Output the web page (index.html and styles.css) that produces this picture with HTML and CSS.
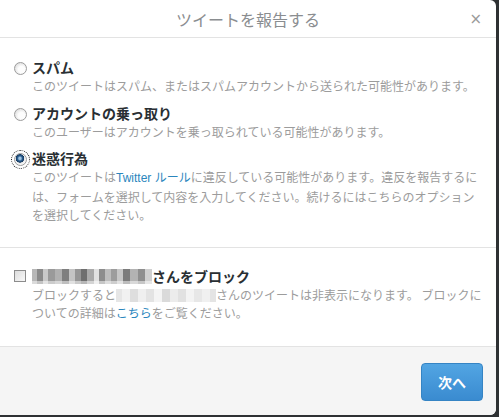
FILE: index.html
```html
<!DOCTYPE html>
<html lang="ja">
<head>
<meta charset="utf-8">
<title>ツイートを報告する</title>
<link rel="stylesheet" href="styles.css">
</head>
<body>
<div class="modal">
  <header class="modal-header">
    <span></span>
    <h1 class="title">ツイートを報告する</h1>
    <span class="close">×</span>
  </header>

  <section class="options">
    <div class="option">
      <span class="radio"></span>
      <div class="option-body">
        <div class="label">スパム</div>
        <div class="desc">このツイートはスパム、またはスパムアカウントから送られた可能性があります。</div>
      </div>
    </div>
    <div class="option">
      <span class="radio"></span>
      <div class="option-body">
        <div class="label">アカウントの乗っ取り</div>
        <div class="desc">このユーザーはアカウントを乗っ取られている可能性があります。</div>
      </div>
    </div>
    <div class="option">
      <span class="radio checked"></span>
      <div class="option-body">
        <div class="label">迷惑行為</div>
        <div class="desc">このツイートは<a class="link latin">Twitter ルール</a>に違反している可能性があります。違反を報告するに<br>は、フォームを選択して内容を入力してください。続けるにはこちらのオプション<br>を選択してください。</div>
      </div>
    </div>
  </section>

  <section class="block">
    <div class="option">
      <span class="checkbox"></span>
      <div class="option-body">
        <div class="label"><span class="mosaic-dark"></span>さんをブロック</div>
        <div class="desc">ブロックすると<span class="mosaic-light"></span>さんのツイートは非表示になります。 ブロックに<br>ついての詳細は<a class="link">こちら</a>をご覧ください。</div>
      </div>
    </div>
  </section>

  <footer class="modal-footer">
    <button class="btn-next">次へ</button>
  </footer>
</div>
</body>
</html>
```

FILE: styles.css
```css
html, body {
  margin: 0;
  padding: 0;
}
body {
  background: #2e3133;
  width: 499px;
  height: 417px;
  overflow: hidden;
  font-family: "Noto Sans CJK JP", "Liberation Sans", sans-serif;
}
.modal {
  width: 496px;
  height: 415px;
  background: #fff;
  border-radius: 0 6px 6px 0;
  overflow: hidden;
  display: flex;
  flex-direction: column;
}
.modal-header {
  height: 37px;
  border-bottom: 1px solid #e3e3e3;
  display: grid;
  grid-template-columns: 1fr auto 1fr;
  align-items: center;
  padding: 0 14px 0 14px;
}
.title {
  margin: 0;
  font-size: 16px;
  font-weight: normal;
  color: #8a8d90;
  line-height: 36px;
}
.close {
  justify-self: end;
  font-family: "DejaVu Sans", sans-serif;
  font-size: 15px;
  color: #9a9a9a;
  line-height: 36px;
}
.options {
  padding: 20px 0 22px 14px;
  border-bottom: 1px solid #e3e3e3;
  display: flex;
  flex-direction: column;
  gap: 8px;
}
.block {
  padding: 19px 0 23px 14px;
  border-bottom: 1px solid #e3e3e3;
}
.option {
  display: grid;
  grid-template-columns: 18px 1fr;
  align-items: start;
}
.label {
  font-size: 14px;
  font-weight: bold;
  color: #292f33;
  line-height: 19px;
  white-space: nowrap;
  display: flex;
  align-items: center;
}
.desc {
  font-size: 12px;
  color: #9c9c9c;
  line-height: 18.5px;
  white-space: nowrap;
}
.latin {
  font-family: "Liberation Sans", "Noto Sans CJK JP", sans-serif;
}
.link {
  color: #2b86bd;
  text-decoration: none;
}
.radio {
  width: 11px;
  height: 11px;
  margin-top: 4px;
  border: 1px solid #9c9c9c;
  border-radius: 50%;
  background: radial-gradient(circle at 60% 60%, #fdfdfd 0 35%, #e4e4e4 70%, #d2d2d2 100%);
  box-sizing: content-box;
}
.radio.checked {
  background: radial-gradient(circle at 45% 40%, #9fc4e2 0 12%, #2a5d8f 28%, #163a60 45%, #e9e9e9 50%, #f7f7f7 70%, #d6d6d6 100%);
  outline: 1px dotted #222;
  outline-offset: 2px;
}
.checkbox {
  width: 10px;
  height: 10px;
  margin-top: 3px;
  margin-left: 0;
  border: 1px solid #8c8c8c;
  background: linear-gradient(135deg, #dcdcdc, #f8f8f8);
  box-sizing: content-box;
}
.mosaic-dark {
  display: inline-block;
  width: 120px;
  height: 15px;
  background:
    linear-gradient(90deg,
      #b7b7b7 0 4%, #8a8a8a 4% 9%, #c9c9c9 9% 13%, #9a9a9a 13% 19%,
      #b0b0b0 19% 25%, #7f7f7f 25% 31%, #c4c4c4 31% 36%, #969696 36% 41%,
      #6f6f6f 41% 46%, #aaaaaa 46% 52%, #e2e2e2 52% 56%, #8d8d8d 56% 61%,
      #bdbdbd 61% 66%, #9d9d9d 66% 71%, #c7c7c7 71% 76%, #7c7c7c 76% 82%,
      #b3b3b3 82% 88%, #8f8f8f 88% 94%, #d0d0d0 94% 100%);
  -webkit-mask: linear-gradient(#000 0 80%, rgba(0,0,0,0.5) 80% 100%);
  mask: linear-gradient(#000 0 80%, rgba(0,0,0,0.5) 80% 100%);
}
.mosaic-light {
  display: inline-block;
  width: 100px;
  height: 13px;
  vertical-align: -2px;
  background:
    linear-gradient(90deg,
      #e6e6e6 0 6%, #f1f1f1 6% 14%, #dedede 14% 22%, #efefef 22% 30%,
      #e3e3e3 30% 38%, #f4f4f4 38% 46%, #dadada 46% 54%, #ececec 54% 62%,
      #e1e1e1 62% 70%, #f3f3f3 70% 78%, #e7e7e7 78% 86%, #f0f0f0 86% 94%, #e4e4e4 94% 100%);
}
.modal-footer {
  flex: 1;
  background: #f5f5f5;
  display: flex;
  justify-content: flex-end;
  align-items: flex-start;
  padding: 16px 13px 0 0;
}
.btn-next {
  width: 62px;
  height: 38px;
  border: 1px solid #3584c4;
  border-radius: 4px;
  background: linear-gradient(#52a5e3, #3a8bd0);
  color: #fff;
  font-family: "Noto Sans CJK JP", sans-serif;
  font-size: 14px;
  font-weight: bold;
  padding: 0;
}
```
